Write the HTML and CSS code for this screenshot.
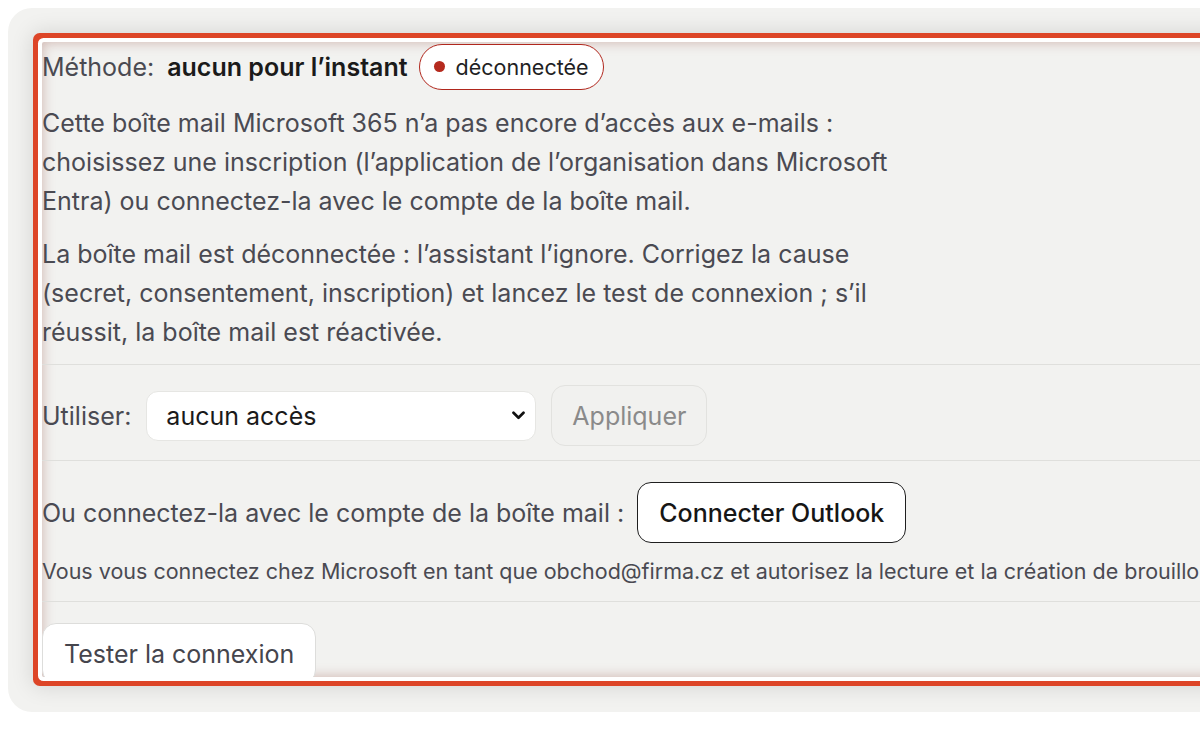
FILE: index.html
```html
<!DOCTYPE html>
<html lang="fr">
<head>
<meta charset="utf-8">
<title>Boîte mail Microsoft 365</title>
<link rel="stylesheet" href="styles.css">
</head>
<body>
<div class="frame">
  <section class="panel">
    <div class="method-row">
      <span class="label">Méthode:</span>
      <strong class="method-value">aucun pour l’instant</strong>
      <span class="badge"><span class="dot"></span>déconnectée</span>
    </div>
    <p class="text first">Cette boîte mail Microsoft 365 n’a pas encore d’accès aux e-mails : choisissez une inscription (l’application de l’organisation dans Microsoft Entra) ou connectez-la avec le compte de la boîte mail.</p>
    <p class="text">La boîte mail est déconnectée : l’assistant l’ignore. Corrigez la cause (secret, consentement, inscription) et lancez le test de connexion ; s’il réussit, la boîte mail est réactivée.</p>

    <div class="section use-row">
      <label class="label" for="access">Utiliser:</label>
      <select id="access" class="select">
        <option>aucun accès</option>
      </select>
      <button class="btn btn-disabled" disabled>Appliquer</button>
    </div>

    <div class="section connect">
      <div class="connect-row">
        <span class="label">Ou connectez-la avec le compte de la boîte mail :</span>
        <button class="btn btn-outline">Connecter Outlook</button>
      </div>
      <p class="hint">Vous vous connectez chez Microsoft en tant que obchod@firma.cz et autorisez la lecture et la création de brouillons.</p>
    </div>

    <div class="section test">
      <button class="btn btn-light">Tester la connexion</button>
    </div>
  </section>
</div>
</body>
</html>
```

FILE: styles.css
```css
html, body {
  margin: 0;
  padding: 0;
  background: #ffffff;
  overflow: hidden;
}

body {
  font-family: Inter, "Noto Sans", "Liberation Sans", sans-serif;
  color: #4a4a52;
}

.frame {
  margin: 8px 0 0 8px;
  width: 1260px;
  height: 704px;
  box-sizing: border-box;
  padding: 34px 0 0 34px;
  background: #f2f2f0;
  border-radius: 24px;
}

.panel {
  height: 635px;
  width: 1300px;
  background: #f2f2f0;
  overflow: hidden;
  border-radius: 2px;
  box-shadow:
    inset 0 0 12px 1px rgba(150, 80, 70, 0.35),
    0 0 0 4px #ffffff,
    0 0 0 9px #dd4527,
    0 0 22px 10px rgba(0, 0, 0, 0.12);
}

.method-row {
  display: flex;
  align-items: center;
  height: 47px;
  margin-top: 1px;
  font-size: 25px;
}

.label {
  color: #4a4a52;
  font-size: 25px;
  white-space: nowrap;
}

.method-value {
  margin-left: 13px;
  font-weight: 600;
  color: #1a1a1a;
}

.badge {
  display: inline-flex;
  align-items: center;
  gap: 11px;
  margin-left: 11px;
  height: 44px;
  padding: 0 14px 0 14px;
  border: 1.5px solid #b0271d;
  border-radius: 999px;
  background: #ffffff;
  color: #1f1f24;
  font-size: 21.5px;
}

.dot {
  width: 11px;
  height: 11px;
  border-radius: 50%;
  background: #b52a1e;
}

.text {
  margin: 14px 0 0 0;
  max-width: 895px;
  font-size: 25px;
  line-height: 39px;
}

.section {
  border-top: 1px solid #dfdfdc;
}

.use-row {
  margin-top: 12px;
  padding: 20px 0 14px;
  display: flex;
  align-items: center;
}

.select {
  margin-left: 15px;
  width: 390px;
  height: 50px;
  padding: 0 40px 0 19px;
  border: 1px solid #e6e6e3;
  border-radius: 12px;
  background-color: #ffffff;
  background-image: url("data:image/svg+xml;utf8,<svg xmlns='http://www.w3.org/2000/svg' width='13' height='9' viewBox='0 0 13 9'><path d='M1.5 1.8 L6.5 6.8 L11.5 1.8' fill='none' stroke='%23111' stroke-width='2.7' stroke-linecap='round' stroke-linejoin='round'/></svg>");
  background-repeat: no-repeat;
  background-position: right 10px center;
  appearance: none;
  -webkit-appearance: none;
  font-family: inherit;
  font-size: 25px;
  color: #1a1a1a;
}

.btn {
  font-family: inherit;
  font-size: 25px;
  height: 61px;
  border-radius: 14px;
  cursor: pointer;
  white-space: nowrap;
}

.btn-disabled {
  margin-left: 15px;
  padding: 0 20px;
  background: #f1f1ef;
  border: 1.5px solid #e2e2df;
  color: #8a8a8a;
}

.connect {
  padding: 21px 0 13px;
}

.connect-row {
  display: flex;
  align-items: center;
}

.btn-outline {
  margin-left: 13px;
  padding: 0 21px;
  background: #ffffff;
  border: 1.5px solid #1f1f1f;
  color: #161616;
  font-weight: 500;
}

.hint {
  margin: 11px 0 0 0;
  font-size: 21.5px;
  line-height: 34px;
  white-space: nowrap;
  color: #4a4a52;
}

.test {
  padding-top: 21px;
}

.btn-light {
  padding: 0 21px;
  background: #ffffff;
  border: 1px solid #dddddb;
  color: #45454d;
}
```
